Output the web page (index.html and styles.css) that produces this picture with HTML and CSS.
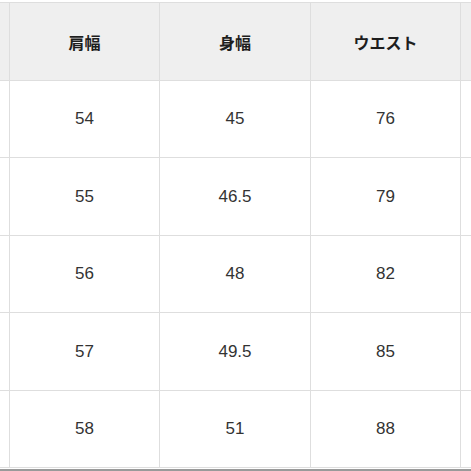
FILE: index.html
```html
<!DOCTYPE html>
<html lang="ja">
<head>
<meta charset="utf-8">
<link rel="stylesheet" href="styles.css">
</head>
<body>
<div class="frame">
  <div class="grid">
    <div class="cell head"></div><div class="cell head">肩幅</div><div class="cell head">身幅</div><div class="cell head">ウエスト</div><div class="cell head"></div>
    <div class="cell"></div><div class="cell">54</div><div class="cell">45</div><div class="cell">76</div><div class="cell"></div>
    <div class="cell"></div><div class="cell">55</div><div class="cell">46.5</div><div class="cell">79</div><div class="cell"></div>
    <div class="cell"></div><div class="cell">56</div><div class="cell">48</div><div class="cell">82</div><div class="cell"></div>
    <div class="cell"></div><div class="cell">57</div><div class="cell">49.5</div><div class="cell">85</div><div class="cell"></div>
    <div class="cell"></div><div class="cell">58</div><div class="cell">51</div><div class="cell">88</div><div class="cell"></div>
  </div>
  <div class="bottom"></div>
</div>
</body>
</html>
```
FILE: styles.css
```css
html, body {
  margin: 0;
  padding: 0;
  background: #ffffff;
}
.frame {
  width: 471px;
  height: 471px;
  overflow: hidden;
  padding-top: 2px;
  box-sizing: border-box;
  display: flex;
  flex-direction: column;
}
.grid {
  display: grid;
  grid-template-columns: 9px 149px 150px 149px 10px;
  grid-template-rows: 77px 76px 77px 76px 77px 76px;
  gap: 1px;
  background: #dedede;
  border-top: 1px solid #dedede;
  border-bottom: 1px solid #dedede;
}
.cell {
  background: #ffffff;
  display: flex;
  align-items: center;
  justify-content: center;
  font-family: "Liberation Sans", "Noto Sans CJK JP", sans-serif;
  font-size: 17px;
  color: #333333;
}
.head {
  background: #efefef;
  font-family: "Noto Sans CJK JP", sans-serif;
  font-weight: 700;
  font-size: 16px;
  color: #1e1e1e;
}
.bottom {
  height: 2px;
  margin-top: 1px;
  background: #9a9a9a;
}
```
